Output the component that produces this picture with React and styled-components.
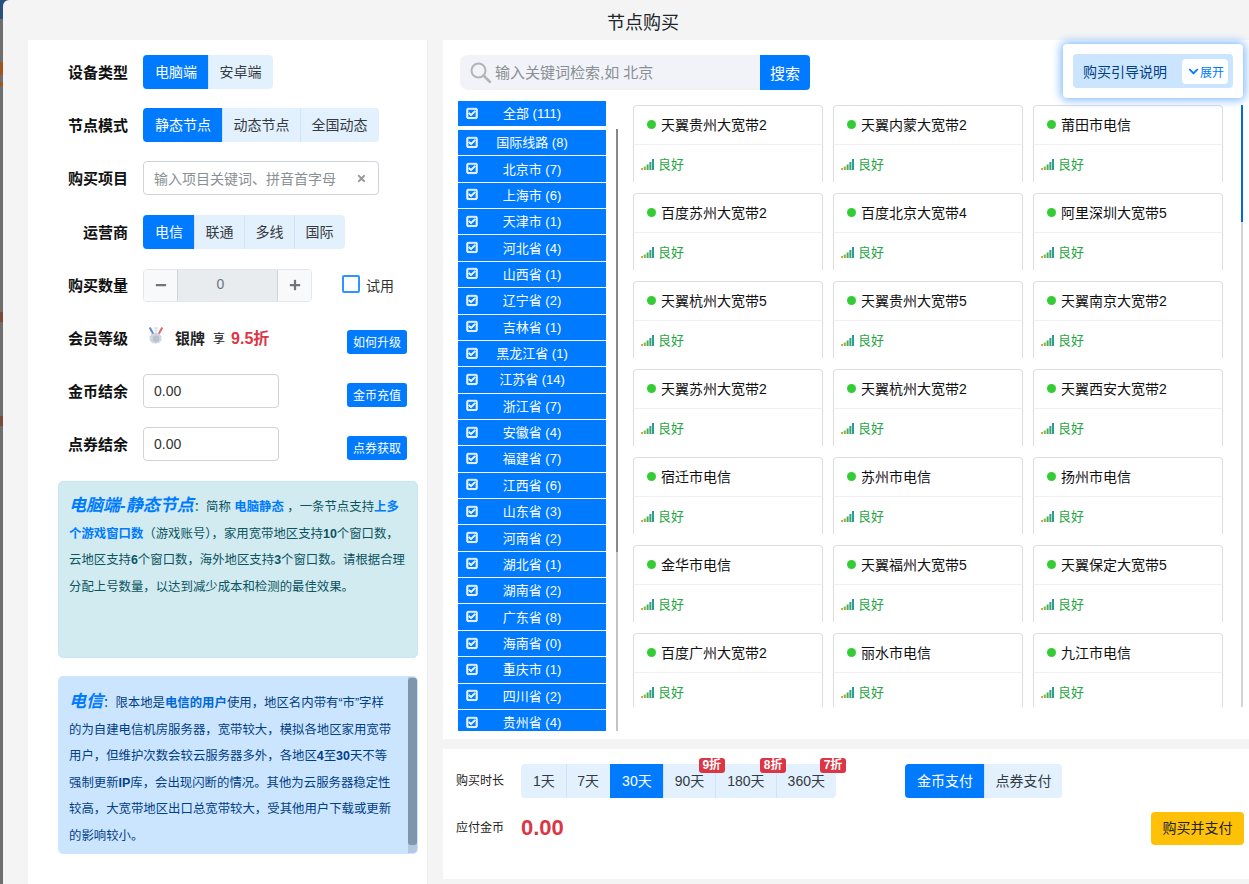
import React from "react";
import styled, { createGlobalStyle } from "styled-components";
import { FaRegCheckSquare, FaTimes, FaMinus, FaPlus, FaChevronDown } from "react-icons/fa";

const GlobalStyle = createGlobalStyle`
  * {
    box-sizing: border-box;
  }
  html,
  body {
    margin: 0;
    height: 100%;
    overflow: hidden;
    font-family: "Liberation Sans", "Noto Sans CJK SC", sans-serif;
    color: #212529;
    background: linear-gradient(
      to bottom,
      #27507c 0 19px,
      #6e6e6e 19px 62px,
      #a0561c 62px 75px,
      #6e6e6e 75px 82px,
      #a0561c 82px 86px,
      #6e6e6e 86px 312px,
      #7c4a3a 312px 322px,
      #6e6e6e 322px 416px,
      #7c4a3a 416px 426px,
      #6e6e6e 426px
    );
  }
`;

const Modal = styled.div`
  margin-left: 3px;
  width: 1246px;
  height: 884px;
  background: #f4f4f4;
  border-top-left-radius: 6px;
  position: relative;
  overflow: hidden;
`;

const Title = styled.div`
  height: 40px;
  padding: 10px 0 0 34px;
  text-align: center;
  font-size: 18px;
  line-height: 26px;
  color: #212529;
`;

const Body = styled.div`
  display: flex;
  height: 844px;
  padding-left: 25px;
`;

const LeftPanel = styled.div`
  width: 400px;
  background: #fff;
  padding: 15px 20px 0 40px;
  border-right: 1px solid #eee;
  flex-shrink: 0;
`;

const Row = styled.div`
  display: flex;
  align-items: center;
  height: 34px;
  margin-bottom: ${(p) => p.$gap || 19}px;
`;

const Label = styled.div`
  width: 60px;
  margin-right: 15px;
  padding-bottom: 2px;
  text-align: right;
  font-size: 15px;
  font-weight: 700;
  color: #111;
  white-space: nowrap;
`;

const Group = styled.div`
  display: inline-flex;
  height: 34px;
  border-radius: 4px;
  overflow: hidden;
  background: #e3f1fe;
`;

const SegButton = styled.div`
  display: flex;
  align-items: center;
  justify-content: center;
  position: relative;
  height: 100%;
  padding: 0 ${(p) => p.$px || 10.5}px 2px;
  font-size: 14px;
  color: ${(p) => (p.$active ? "#fff" : "#343a40")};
  background: ${(p) => (p.$active ? "#007bff" : "transparent")};
  border-left: 1px solid ${(p) => (p.$active ? "#007bff" : "#cde4fa")};
  white-space: nowrap;
  &:first-child {
    border-left: none;
    padding: 0 11px 2px 12px;
  }
  &:last-child {
    padding-right: 11px;
  }
`;

const TextInput = styled.div`
  display: flex;
  align-items: center;
  justify-content: space-between;
  width: ${(p) => p.$w || 136}px;
  height: 34px;
  padding: 0 11px 0 10px;
  border: 1px solid #ced4da;
  border-radius: 4px;
  background: #fff;
  font-size: 14px;
  color: ${(p) => (p.$placeholder ? "#8a8f94" : "#333")};
`;

const ClearIcon = styled(FaTimes)`
  color: #9a9a9a;
  font-size: 11px;
`;

const Stepper = styled.div`
  display: flex;
  width: 169px;
  height: 33px;
  border: 1px solid #e3e6ea;
  border-radius: 4px;
  overflow: hidden;
`;

const StepButton = styled.div`
  display: flex;
  align-items: center;
  justify-content: center;
  width: 33px;
  background: #f8f9fa;
  color: #6f757b;
  font-size: 12px;
`;

const StepValue = styled.div`
  flex: 1;
  display: flex;
  align-items: center;
  justify-content: center;
  padding: 0 14px 2px 0;
  background: #e9ecef;
  border: 1px solid #ced4da;
  border-width: 0 1px;
  font-size: 14px;
  color: #6c757d;
`;

const TrialBox = styled.span`
  width: 18px;
  height: 18px;
  margin: 0 0 2px 30px;
  border: 2px solid #2f94ff;
  border-radius: 2px;
  background: #fff;
`;

const TrialText = styled.span`
  margin-left: 6px;
  font-size: 14px;
  color: #333;
`;

const MemberWrap = styled.div`
  display: flex;
  align-items: center;
  flex: 1;
  height: 24px;
  padding: 0 0 2px 4px;
`;

const MemberName = styled.span`
  margin-left: 10px;
  font-size: 15px;
  font-weight: 700;
  color: #222;
`;

const MemberEnjoy = styled.span`
  margin-left: 8px;
  font-size: 12px;
  color: #222;
`;

const MemberRate = styled.span`
  margin-left: 6px;
  font-size: 16px;
  font-weight: 700;
  color: #dc3545;
`;

const SmallButton = styled.div`
  margin: 0 0 1px auto;
  width: 60px;
  height: 24px;
  padding-bottom: 2px;
  display: flex;
  align-items: center;
  justify-content: center;
  border-radius: 3px;
  background: #007bff;
  color: #fff;
  font-size: 12px;
  align-self: flex-end;
`;

const Note = styled.div`
  position: relative;
  width: 360px;
  height: ${(p) => p.$h}px;
  margin: 0 0 18px -10px;
  padding: ${(p) => p.$pt}px 0 0 10px;
  border-radius: 5px;
  background: ${(p) => p.$bg};
  border: 1px solid ${(p) => p.$border};
  color: ${(p) => p.$color};
  font-size: 12.4px;
  line-height: 26.5px;
  white-space: nowrap;
  overflow: hidden;
`;

const NoteTitle = styled.span`
  font-size: 17px;
  font-weight: 700;
  font-style: italic;
  line-height: 1;
  color: #007bff;
`;

const Strong = styled.b`
  font-weight: 700;
  color: ${(p) => p.$color || "inherit"};
`;

const NoteScrollTrack = styled.div`
  position: absolute;
  top: 0;
  right: 0;
  bottom: 0;
  width: 9px;
  background: #b3c7e0;
`;

const NoteScrollThumb = styled.div`
  height: 167px;
  margin-top: 1px;
  border-radius: 3px;
  background: #7f95ab;
`;

const RightColumn = styled.div`
  display: flex;
  flex-direction: column;
  flex: 1;
  margin-left: 15px;
  min-width: 0;
`;

const RightTop = styled.div`
  height: 699px;
  padding: 15px 0 0 15px;
  background: #fff;
  overflow: hidden;
`;

const SearchBar = styled.div`
  display: flex;
  width: 350px;
  height: 35px;
  margin-left: 2px;
`;

const SearchInput = styled.div`
  flex: 1;
  display: flex;
  align-items: center;
  padding: 0 0 2px 10px;
  background: #f1f3f9;
  border-radius: 8px 0 0 8px;
  font-size: 15px;
  color: #8a8f94;
`;

const SearchIcon = styled.svg`
  width: 21px;
  height: 21px;
  margin: 2px 4px 0 0;
`;

const SearchButton = styled.div`
  width: 50px;
  display: flex;
  align-items: center;
  justify-content: center;
  background: #007bff;
  border-radius: 0 4px 4px 0;
  color: #fff;
  font-size: 15px;
`;

const Content = styled.div`
  display: flex;
  height: 630px;
  margin-top: 11px;
`;

const RegionColumn = styled.div`
  width: 148px;
  flex-shrink: 0;
`;

const RegionAll = styled.div`
  height: 25px;
  margin-bottom: 4px;
`;

const RegionList = styled.div`
  height: 601px;
  overflow: hidden;
`;

const RegionItem = styled.div`
  position: relative;
  display: flex;
  align-items: center;
  justify-content: center;
  height: ${(p) => p.$h || 26.36}px;
  padding-bottom: 2px;
  background: #007bff;
  border-bottom: ${(p) => (p.$flat ? 0 : 1)}px solid #fff;
  color: #fff;
  font-size: 13px;
`;

const RegionCheck = styled(FaRegCheckSquare)`
  position: absolute;
  left: 8px;
  top: 50%;
  transform: translateY(-55%);
  font-size: 12px;
  color: #eaf4ff;
  stroke: currentColor;
  stroke-width: 40;
`;

const RegionScroll = styled.div`
  width: 2px;
  height: 602px;
  margin: 28px 0 0 10px;
  background: #c4c4c4;
  flex-shrink: 0;
`;

const RegionScrollThumb = styled.div`
  height: 423px;
  background: #888;
`;

const CardsWrap = styled.div`
  position: relative;
  flex: 1;
  height: 602px;
  margin: 4px 0 0 15px;
  overflow: hidden;
`;

const CardGrid = styled.div`
  display: grid;
  grid-template-columns: repeat(3, 190px);
  grid-auto-rows: 77px;
  column-gap: 10px;
  row-gap: 11px;
`;

const Card = styled.div`
  border: 1px solid #ddd;
  border-bottom: none;
  border-radius: 4px 4px 0 0;
  background: #fff;
`;

const CardHead = styled.div`
  display: flex;
  align-items: center;
  height: 39px;
  padding: 0 0 2px 13px;
  border-bottom: 1px solid #eef0f5;
  font-size: 14px;
  color: #111;
`;

const Dot = styled.span`
  width: 9px;
  height: 9px;
  margin-right: 5px;
  border-radius: 50%;
  background: #32cd32;
`;

const CardFoot = styled.div`
  display: flex;
  align-items: center;
  height: 38px;
  padding: 0 0 2px 7px;
  font-size: 13px;
  color: #28a745;
`;

const SignalIcon = styled.svg`
  width: 13px;
  height: 11px;
  margin: 2px 4px 0 0;
`;

const CardScrollTrack = styled.div`
  position: absolute;
  left: 608px;
  top: 0;
  width: 2px;
  height: 100%;
  background: #d4d4d4;
`;

const CardScrollThumb = styled.div`
  height: 117px;
  background: #0069d9;
`;

const GuidePanel = styled.div`
  position: absolute;
  right: 6px;
  top: 44px;
  width: 180px;
  height: 54px;
  padding: 10px;
  background: #fff;
  border-radius: 4px;
  box-shadow: 0 0 10px 2px #7db8ff;
`;

const GuideInner = styled.div`
  display: flex;
  align-items: center;
  justify-content: space-between;
  height: 34px;
  padding: 0 5px 0 10px;
  border-radius: 4px;
  background: #cce5ff;
  font-size: 14px;
  color: #004085;
`;

const GuideToggle = styled.div`
  display: flex;
  align-items: center;
  gap: 1px;
  width: 46px;
  height: 25px;
  padding-left: 6px;
  background: #fff;
  border-radius: 4px;
  font-size: 12px;
  color: #007bff;
`;

const RightBottom = styled.div`
  position: relative;
  height: 130px;
  margin-top: 10px;
  padding: 15px 5px 0 13px;
  background: #fff;
`;

const BottomRow = styled.div`
  display: flex;
  align-items: center;
  margin-bottom: 14px;
`;

const BottomLabel = styled.div`
  width: 65px;
  padding-bottom: 4px;
  font-size: 12px;
  color: #222;
`;

const Amount = styled.div`
  padding-bottom: 2px;
  font-size: 22px;
  font-weight: 700;
  color: #dc3545;
`;

const Discount = styled.span`
  position: absolute;
  right: -10px;
  top: -6px;
  z-index: 1;
  width: 26px;
  height: 15px;
  text-align: center;
  line-height: 15px;
  border-radius: 3px;
  background: #dc3545;
  color: #fff;
  font-size: 12px;
  font-weight: 700;
`;

const TimeGroup = styled(Group)`
  overflow: visible;
`;

const PayGroup = styled(Group)`
  margin-left: 69px;
`;

const BuyButton = styled.div`
  margin-left: auto;
  width: 93px;
  height: 33px;
  padding-bottom: 3px;
  display: flex;
  align-items: center;
  justify-content: center;
  background: #ffc107;
  border-radius: 4px;
  font-size: 14px;
  color: #212529;
`;

const Medal = () => (
  <svg width="18" height="20" viewBox="0 0 20 22">
    <path d="M4 0 L9 9 L7 10 L2 1 Z" fill="#5f86d8" />
    <path d="M16 0 L11 9 L13 10 L18 1 Z" fill="#d9696b" />
    <path d="M8 0h4l-1 8H9z" fill="#e3e6ee" />
    <path
      d="M10 6l2.2 1.4 2.6-.2 1 2.4 2 1.7-.9 2.5.6 2.5-2.2 1.4-1.2 2.3-2.6-.4-2.1 1.4-2.1-1.4-2.6.4-1.2-2.3-2.2-1.4.6-2.5-.9-2.5 2-1.7 1-2.4 2.6.2z"
      fill="#cfd6df"
      transform="translate(1.6 1.2) scale(.84)"
    />
    <circle cx="10" cy="13" r="3.6" fill="#b9c2cd" />
  </svg>
);

const Signal = () => (
  <SignalIcon viewBox="0 0 13 11">
    <rect x="0" y="9" width="2" height="2" fill="#c9a83a" />
    <rect x="2.8" y="7.5" width="2" height="3.5" fill="#8fb04a" />
    <rect x="5.6" y="5.5" width="2" height="5.5" fill="#4cae5c" />
    <rect x="8.4" y="3" width="2" height="8" fill="#30a878" />
    <rect x="11" y="0" width="2" height="11" fill="#2a9d9d" />
  </SignalIcon>
);

const regions = [
  "国际线路 (8)", "北京市 (7)", "上海市 (6)", "天津市 (1)", "河北省 (4)", "山西省 (1)",
  "辽宁省 (2)", "吉林省 (1)", "黑龙江省 (1)", "江苏省 (14)", "浙江省 (7)", "安徽省 (4)",
  "福建省 (7)", "江西省 (6)", "山东省 (3)", "河南省 (2)", "湖北省 (1)", "湖南省 (2)",
  "广东省 (8)", "海南省 (0)", "重庆市 (1)", "四川省 (2)", "贵州省 (4)",
];

const nodes = [
  "天翼贵州大宽带2", "天翼内蒙大宽带2", "莆田市电信",
  "百度苏州大宽带2", "百度北京大宽带4", "阿里深圳大宽带5",
  "天翼杭州大宽带5", "天翼贵州大宽带5", "天翼南京大宽带2",
  "天翼苏州大宽带2", "天翼杭州大宽带2", "天翼西安大宽带2",
  "宿迁市电信", "苏州市电信", "扬州市电信",
  "金华市电信", "天翼福州大宽带5", "天翼保定大宽带5",
  "百度广州大宽带2", "丽水市电信", "九江市电信",
];

const days = [
  { text: "1天" },
  { text: "7天" },
  { text: "30天", active: true, px: 11.5 },
  { text: "90天", badge: "9折" },
  { text: "180天", badge: "8折", px: 11.5 },
  { text: "360天", badge: "7折" },
];

export default function App() {
  return (
    <>
      <GlobalStyle />
      <Modal>
        <Title>节点购买</Title>
        <Body>
          <LeftPanel>
            <Row>
              <Label>设备类型</Label>
              <Group>
                <SegButton $active>电脑端</SegButton>
                <SegButton>安卓端</SegButton>
              </Group>
            </Row>
            <Row>
              <Label>节点模式</Label>
              <Group>
                <SegButton $active>静态节点</SegButton>
                <SegButton>动态节点</SegButton>
                <SegButton>全国动态</SegButton>
              </Group>
            </Row>
            <Row $gap={20}>
              <Label>购买项目</Label>
              <TextInput $w={236} $placeholder>
                输入项目关键词、拼音首字母
                <ClearIcon />
              </TextInput>
            </Row>
            <Row>
              <Label>运营商</Label>
              <Group>
                <SegButton $active>电信</SegButton>
                <SegButton>联通</SegButton>
                <SegButton>多线</SegButton>
                <SegButton>国际</SegButton>
              </Group>
            </Row>
            <Row>
              <Label>购买数量</Label>
              <Stepper>
                <StepButton>
                  <FaMinus />
                </StepButton>
                <StepValue>0</StepValue>
                <StepButton>
                  <FaPlus />
                </StepButton>
              </Stepper>
              <TrialBox />
              <TrialText>试用</TrialText>
            </Row>
            <Row>
              <Label>会员等级</Label>
              <MemberWrap>
                <Medal />
                <MemberName>银牌</MemberName>
                <MemberEnjoy>享</MemberEnjoy>
                <MemberRate>9.5折</MemberRate>
              </MemberWrap>
              <SmallButton>如何升级</SmallButton>
            </Row>
            <Row>
              <Label>金币结余</Label>
              <TextInput>0.00</TextInput>
              <SmallButton>金币充值</SmallButton>
            </Row>
            <Row $gap={20}>
              <Label>点券结余</Label>
              <TextInput>0.00</TextInput>
              <SmallButton>点券获取</SmallButton>
            </Row>
            <Note $h={177} $pt={12} $bg="#d1ebf1" $border="#c8e6f8" $color="#0c5460">
              <NoteTitle>电脑端-静态节点</NoteTitle>：简称 <Strong $color="#007bff">电脑静态</Strong> ，一条节点支持
              <Strong $color="#007bff">上多</Strong>
              <br />
              <Strong $color="#007bff">个游戏窗口数</Strong>（游戏账号），家用宽带地区支持<Strong>10</Strong>个窗口数，
              <br />
              云地区支持<Strong>6</Strong>个窗口数，海外地区支持<Strong>3</Strong>个窗口数。请根据合理
              <br />
              分配上号数量，以达到减少成本和检测的最佳效果。
            </Note>
            <Note $h={178} $pt={13} $bg="#cce5ff" $border="#cce5ff" $color="#004085">
              <NoteTitle>电信</NoteTitle>：限本地是<Strong $color="#0069d9">电信的用户</Strong>使用，地区名内带有“市”字样
              <br />
              的为自建电信机房服务器，宽带较大，模拟各地区家用宽带
              <br />
              用户，但维护次数会较云服务器多外，各地区<Strong>4</Strong>至<Strong>30</Strong>天不等
              <br />
              强制更新<Strong>IP</Strong>库，会出现闪断的情况。其他为云服务器稳定性
              <br />
              较高，大宽带地区出口总宽带较大，受其他用户下载或更新
              <br />
              的影响较小。
              <NoteScrollTrack>
                <NoteScrollThumb />
              </NoteScrollTrack>
            </Note>
          </LeftPanel>
          <RightColumn>
            <RightTop>
              <SearchBar>
                <SearchInput>
                  <SearchIcon viewBox="0 0 21 21">
                    <circle cx="8.5" cy="8.5" r="7" fill="none" stroke="#b4b4b4" strokeWidth="2" />
                    <path d="M13.5 13.5 L20 20" stroke="#b4b4b4" strokeWidth="2.6" strokeLinecap="round" />
                  </SearchIcon>
                  输入关键词检索,如 北京
                </SearchInput>
                <SearchButton>搜索</SearchButton>
              </SearchBar>
              <Content>
                <RegionColumn>
                  <RegionAll>
                    <RegionItem $h={25} $flat>
                      <RegionCheck />
                      全部 (111)
                    </RegionItem>
                  </RegionAll>
                  <RegionList>
                    {regions.map((name) => (
                      <RegionItem key={name}>
                        <RegionCheck />
                        {name}
                      </RegionItem>
                    ))}
                  </RegionList>
                </RegionColumn>
                <RegionScroll>
                  <RegionScrollThumb />
                </RegionScroll>
                <CardsWrap>
                  <CardGrid>
                    {nodes.map((name) => (
                      <Card key={name}>
                        <CardHead>
                          <Dot />
                          {name}
                        </CardHead>
                        <CardFoot>
                          <Signal />
                          良好
                        </CardFoot>
                      </Card>
                    ))}
                  </CardGrid>
                  <CardScrollTrack>
                    <CardScrollThumb />
                  </CardScrollTrack>
                </CardsWrap>
              </Content>
            </RightTop>
            <RightBottom>
              <BottomRow>
                <BottomLabel>购买时长</BottomLabel>
                <TimeGroup>
                  {days.map((d) => (
                    <SegButton key={d.text} $active={d.active} $px={d.px}>
                      {d.text}
                      {d.badge && <Discount>{d.badge}</Discount>}
                    </SegButton>
                  ))}
                </TimeGroup>
                <PayGroup>
                  <SegButton $active>金币支付</SegButton>
                  <SegButton>点券支付</SegButton>
                </PayGroup>
              </BottomRow>
              <BottomRow>
                <BottomLabel>应付金币</BottomLabel>
                <Amount>0.00</Amount>
                <BuyButton>购买并支付</BuyButton>
              </BottomRow>
            </RightBottom>
          </RightColumn>
        </Body>
        <GuidePanel>
          <GuideInner>
            购买引导说明
            <GuideToggle>
              <FaChevronDown size={11} />
              展开
            </GuideToggle>
          </GuideInner>
        </GuidePanel>
      </Modal>
    </>
  );
}
